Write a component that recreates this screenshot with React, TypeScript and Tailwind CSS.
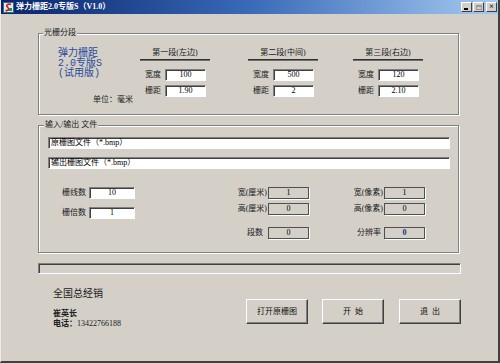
import React from "react";

const FONT = "font-['Liberation_Serif','Noto_Sans_CJK_SC',serif]";

function WhiteInput({ value, cls }: { value: string; cls: string }) {
  return (
    <div
      className={`${cls} h-[12px] bg-white border border-t-[#808080] border-l-[#808080] border-b-white border-r-white shadow-[inset_1px_1px_0_#404040] flex items-center justify-center text-[8px] leading-none text-black`}
    >
      {value}
    </div>
  );
}

function ReadBox({ value, blue }: { value: string; blue?: boolean }) {
  return (
    <div
      className={`w-[41px] h-[12px] bg-[#d4d0c8] border border-[#505050] shadow-[1px_1px_0_#fff] flex items-center justify-center text-[8px] leading-none ${
        blue ? "text-[#1a2a8c] font-bold" : "text-black"
      }`}
    >
      {value}
    </div>
  );
}

function Section({ title, w, h, cls }: { title: string; w: string; h: string; cls: string }) {
  return (
    <div className={`${cls} w-[70px] mt-[13px] flex flex-col`}>
      <div className="h-[12px] flex items-center justify-center text-[8px] text-[#202020]">{title}</div>
      <div className="h-[2px] border-t border-t-[#303030] border-b border-b-[#707070]" />
      <div className="mt-[8px] flex items-center h-[12px]">
        <span className="ml-[5px] w-[20px] text-[8px] text-[#202020]">宽度</span>
        <WhiteInput value={w} cls="w-[41px]" />
      </div>
      <div className="mt-[4px] flex items-center h-[12px]">
        <span className="ml-[5px] w-[20px] text-[8px] text-[#202020]">栅距</span>
        <WhiteInput value={h} cls="w-[41px]" />
      </div>
    </div>
  );
}

function Btn({ label, cls }: { label: string; cls: string }) {
  return (
    <div
      className={`${cls} w-[62px] h-[25px] bg-[#d4d0c8] border border-t-white border-l-white border-b-[#404040] border-r-[#404040] shadow-[inset_-1px_-1px_0_#808080] flex items-center justify-center text-[8px] text-[#101010] whitespace-pre`}
    >
      {label}
    </div>
  );
}

export default function App() {
  return (
    <div
      className={`${FONT} w-[500px] h-[363px] bg-[#d4d0c8] flex flex-col overflow-hidden border-l border-l-[#eeece6] border-r-2 border-r-[#404040] border-b-2 border-b-[#404040] text-[8px] leading-[10px] text-black`}
    >
      {/* Title bar */}
      <div className="h-[14px] shrink-0 flex items-center bg-linear-to-r from-[#0a246a] via-[#3a6ab8] to-[#a6caf0]">
        <svg width="11" height="11" viewBox="0 0 11 11" className="ml-[2px]">
          <rect x="0" y="0" width="11" height="11" fill="#e8e8e8" />
          <rect x="0.5" y="0.5" width="10" height="10" fill="none" stroke="#2a6a9a" />
          <path d="M8 2.5 C5 1.5 2.5 3 4.5 5 C6.5 7 6 9 2.5 8.5" stroke="#d01818" strokeWidth="1.6" fill="none" />
          <rect x="6" y="6" width="3" height="3" fill="#1a9a3a" />
        </svg>
        <span className="ml-[2px] text-white font-bold text-[8px] leading-none">弹力栅距2.0专版S（V1.0）</span>
        <div className="ml-auto mr-[1px] flex items-center gap-[1px]">
          <div className="w-[11px] h-[10px] bg-[#d4d0c8] border border-t-white border-l-white border-b-[#404040] border-r-[#404040] flex items-end pl-[2px] pb-[1px]">
            <div className="w-[4px] h-[2px] bg-black" />
          </div>
          <div className="w-[11px] h-[10px] bg-[#d4d0c8] border border-t-white border-l-white border-b-[#404040] border-r-[#404040] flex items-center justify-center">
            <div className="w-[6px] h-[5px] border border-[#9a9a9a] border-t-2" />
          </div>
          <div className="ml-[1px] w-[11px] h-[10px] bg-[#d4d0c8] border border-t-white border-l-white border-b-[#404040] border-r-[#404040] flex items-center justify-center text-[8px] font-bold leading-none">
            ×
          </div>
        </div>
      </div>

      {/* Group 1 */}
      <div className="relative ml-[37px] mt-[19px] w-[421px] h-[82px] shrink-0 border border-[#808080] shadow-[inset_1px_1px_0_#fff,1px_1px_0_#fff] flex">
        <span className="absolute left-[4px] -top-[6px] px-[1px] bg-[#d4d0c8] text-[8px] leading-[10px] text-[#202020]">光栅分段</span>
        <div className="w-[101px] flex flex-col">
          <div className="ml-[19px] mt-[15px] text-[#2b4a9c] text-[10px] leading-[10px] font-['Liberation_Mono','Noto_Sans_CJK_SC',monospace]">
            <div>弹力栅距</div>
            <div>2.0专版S</div>
            <div>(试用版)</div>
          </div>
          <div className="ml-[54px] mt-[16px] text-[8px] leading-[10px] text-[#202020]">单位：毫米</div>
        </div>
        <Section title="第一段(左边)" w="100" h="1.90" cls="" />
        <Section title="第二段(中间)" w="500" h="2" cls="ml-[38px]" />
        <Section title="第三段(右边)" w="120" h="2.10" cls="ml-[35px]" />
      </div>

      {/* Group 2 */}
      <div className="relative ml-[37px] mt-[10px] w-[421px] h-[128px] shrink-0 border border-[#808080] shadow-[inset_1px_1px_0_#fff,1px_1px_0_#fff] flex flex-col">
        <span className="absolute left-[5px] -top-[6px] px-[1px] bg-[#d4d0c8] text-[8px] leading-[10px] text-[#202020]">输入/输出 文件</span>
        <div className="ml-[9px] mt-[11px] w-[402px] h-[12px] bg-white border border-t-[#808080] border-l-[#808080] border-b-white border-r-white shadow-[inset_1px_1px_0_#404040] flex items-center pl-[2px] text-[8px] leading-none">
          原栅图文件（*.bmp）
        </div>
        <div className="ml-[9px] mt-[8px] w-[402px] h-[12px] bg-white border border-t-[#808080] border-l-[#808080] border-b-white border-r-white shadow-[inset_1px_1px_0_#404040] flex items-center pl-[2px] text-[8px] leading-none">
          输出栅图文件（*.bmp）
        </div>
        <div className="mt-[18px] flex">
          <div className="ml-[9px] w-[87px] flex flex-col">
            <div className="flex items-center justify-end h-[12px] gap-[3px]">
              <span className="text-[#202020]">栅线数</span>
              <WhiteInput value="10" cls="w-[46px]" />
            </div>
            <div className="mt-[8px] flex items-center justify-end h-[12px] gap-[3px]">
              <span className="text-[#202020]">栅倍数</span>
              <WhiteInput value="1" cls="w-[46px]" />
            </div>
          </div>
          <div className="w-[174px] flex flex-col">
            <div className="flex items-center justify-end h-[12px] gap-[1px]">
              <span className="text-[#202020]">宽(厘米)</span>
              <ReadBox value="1" />
            </div>
            <div className="mt-[4px] flex items-center justify-end h-[12px] gap-[1px]">
              <span className="text-[#202020]">高(厘米)</span>
              <ReadBox value="0" />
            </div>
            <div className="mt-[12px] flex items-center justify-end h-[12px] gap-[5px]">
              <span className="text-[#202020]">段数</span>
              <ReadBox value="0" />
            </div>
          </div>
          <div className="w-[116px] flex flex-col">
            <div className="flex items-center justify-end h-[12px] gap-[1px]">
              <span className="text-[#202020]">宽(像素)</span>
              <ReadBox value="1" />
            </div>
            <div className="mt-[4px] flex items-center justify-end h-[12px] gap-[1px]">
              <span className="text-[#202020]">高(像素)</span>
              <ReadBox value="0" />
            </div>
            <div className="mt-[12px] flex items-center justify-end h-[12px] gap-[3px]">
              <span className="text-[#202020]">分辨率</span>
              <ReadBox value="0" blue />
            </div>
          </div>
        </div>
      </div>

      {/* Progress bar */}
      <div className="ml-[37px] mt-[10px] w-[423px] h-[11px] shrink-0 border border-t-[#808080] border-l-[#808080] border-b-white border-r-white shadow-[inset_1px_1px_0_#404040]" />

      {/* Bottom */}
      <div className="flex">
        <div className="ml-[52px] w-[193px] flex flex-col">
          <div className="mt-[13px] text-[10px] leading-[12px] text-[#202020] font-['Noto_Sans_CJK_SC',sans-serif]">全国总经销</div>
          <div className="mt-[10px] text-[8px] leading-[10px] font-bold text-[#202020]">崔英长</div>
          <div className="text-[8px] leading-[10px] font-bold text-[#202020]">
            电话：<span className="font-normal">13422766188</span>
          </div>
        </div>
        <div className="mt-[25px] flex">
          <Btn label="打开原栅图" cls="" />
          <Btn label="开  始" cls="ml-[14px]" />
          <Btn label="退  出" cls="ml-[15px]" />
        </div>
      </div>
    </div>
  );
}
